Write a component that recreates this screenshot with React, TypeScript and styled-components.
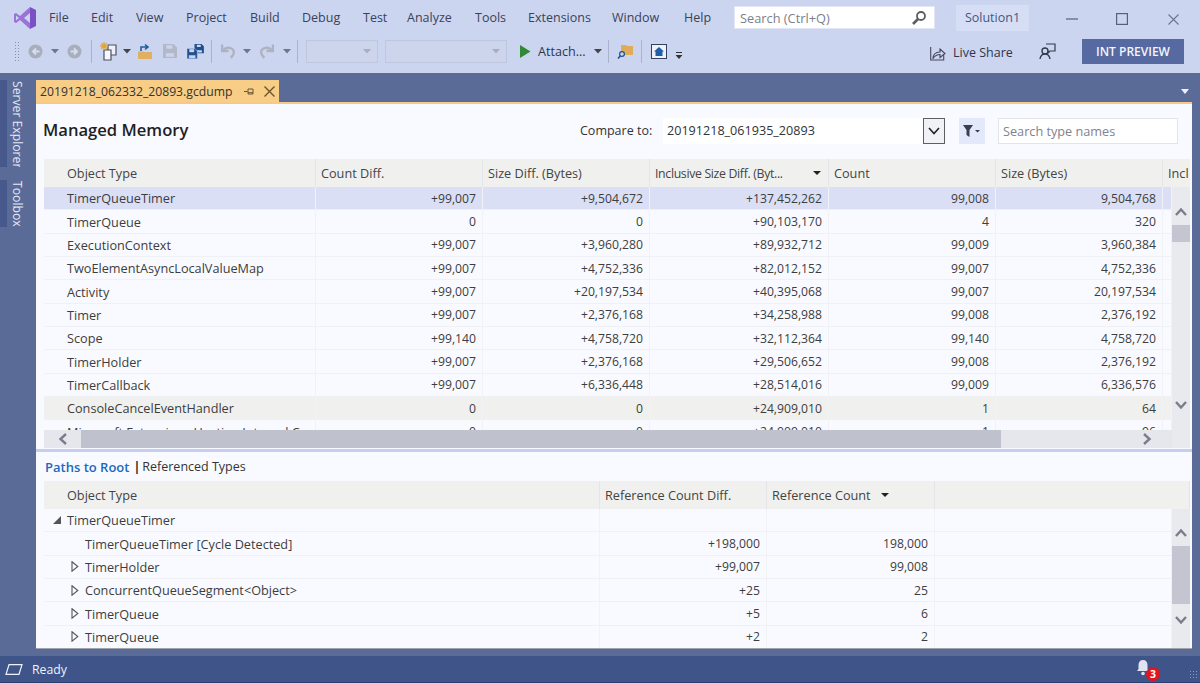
import React from "react";
import styled, { createGlobalStyle } from "styled-components";

const Global = createGlobalStyle`
  html, body { margin: 0; padding: 0; }
  body { width: 1200px; height: 683px; overflow: hidden; background: #5b6b97; font-family: "Open Sans", "Noto Sans", "Liberation Sans", sans-serif; font-size: 12px; color: #3a3a3a; }
  * { box-sizing: border-box; }
`;

const Page = styled.div`
  width: 1200px; height: 683px; display: flex; flex-direction: column; background: #5b6b97; overflow: hidden;
`;
const Chrome = styled.header`
  height: 73px; background: #ccd5f0; display: flex; flex-direction: column; flex: none;
`;
const MenuRow = styled.div`
  height: 35px; display: flex; align-items: center; padding-left: 13px;
`;
const LogoSlot = styled.div`
  width: 36px; height: 35px; display: flex; align-items: center; flex: none;
`;
const MenuItem = styled.div<{ $w: number }>`
  width: ${(p) => p.$w}px; font-size: 12.5px; color: #3b4258; flex: none;
`;
const QuickSearch = styled.div`
  width: 201px; height: 23px; background: #fff; display: flex; align-items: center; justify-content: space-between;
  padding: 0 7px 0 5px; color: #7c7f8a; font-size: 12.8px; flex: none; border: 1px solid #e3e7f5;
`;
const SolutionName = styled.div`
  width: 73px; height: 26px; margin-left: 21px; background: #d6def5; color: #48567f; font-size: 12.5px;
  display: flex; align-items: center; justify-content: center; flex: none;
`;
const WindowButtons = styled.div`
  margin-left: auto; display: flex;
`;
const WindowButton = styled.div<{ $w: number }>`
  width: ${(p) => p.$w}px; height: 35px; display: flex; align-items: center; justify-content: center; padding-top: 3px;
`;
const ToolRow = styled.div`
  height: 38px; padding: 0 16px 6px 12px; display: flex; align-items: center;
`;
const Slot = styled.div<{ $w: number; $ml?: number }>`
  width: ${(p) => p.$w}px; margin-left: ${(p) => p.$ml ?? 0}px; height: 24px; display: flex; align-items: center; justify-content: center; flex: none;
`;
const ToolSep = styled.div`
  width: 1px; height: 23px; background: #a9b2cd;
`;
const Grip = styled.div`
  width: 7px; height: 20px;
  background-image: radial-gradient(#8a90a3 0.9px, transparent 1px);
  background-size: 3px 3px;
`;
const ToolCombo = styled.div<{ $w: number; $ml: number }>`
  width: ${(p) => p.$w}px; margin-left: ${(p) => p.$ml}px; height: 23px; background: #cdd5ec; border: 1px solid #bfc7dc;
  display: flex; align-items: center; justify-content: flex-end; padding-right: 6px; flex: none;
`;
const AttachLabel = styled.div`
  width: 53px; margin-left: 1px; font-size: 12.6px; color: #30354a; flex: none;
`;
const ToolRight = styled.div`
  margin-left: auto; display: flex; align-items: center;
`;
const LiveShareLabel = styled.div`
  margin-left: 7px; font-size: 12.5px; color: #30354a; width: 86px; padding-top: 3px;
`;
const PreviewButton = styled.div`
  width: 102px; height: 25px; margin-left: 26px; background: #5669a0; color: #f3f5fc; font-size: 12px; font-weight: 600;
  display: flex; align-items: center; justify-content: center;
`;
const Workspace = styled.div`
  flex: 1; display: flex; min-height: 0;
`;
const SideRail = styled.aside`
  width: 36px; flex: none; padding-top: 7px; display: flex; flex-direction: column; gap: 13px;
`;
const RailTab = styled.div<{ $h: number }>`
  height: ${(p) => p.$h}px; border-left: 7px solid #47598c; writing-mode: vertical-rl; color: #e4e8f7; font-size: 12.2px;
  padding: 1px 11px 0 0; line-height: 16px; white-space: nowrap; overflow: hidden;
`;
const DocArea = styled.main`
  width: 1156px; flex: none; display: flex; flex-direction: column; padding-top: 7px;
`;
const TabStrip = styled.div`
  height: 22px; display: flex; position: relative; flex: none;
`;
const DocTab = styled.div`
  width: 243px; background: #f8cd85; display: flex; align-items: center; padding-left: 4px; font-size: 12.2px; color: #333;
`;
const TabName = styled.span`
  width: 204px; flex: none;
`;
const TabIcons = styled.div`
  display: flex; align-items: center; gap: 9px;
`;
const StripMenu = styled.div`
  position: absolute; right: 3px; top: 9px;
  width: 0; height: 0; border-left: 4px solid transparent; border-right: 4px solid transparent; border-top: 5px solid #eef1fb;
`;
const Content = styled.div`
  height: 547px; background: #f9faff; border-top: 2px solid #f6c987; border-bottom: 1px solid #9ea3ae; display: flex; flex-direction: column; flex: none;
`;
const TitleRow = styled.div`
  height: 55px; flex: none; display: flex; align-items: center; padding: 0 14px 2px 7px;
`;
const Title = styled.h1`
  margin: 0 auto 0 0; font-size: 16.6px; font-weight: 600; color: #1f1f1f; position: relative; top: -1px;
`;
const CompareLabel = styled.div`
  font-size: 12.5px; color: #333; width: 83px; flex: none;
`;
const CompareCombo = styled.div`
  width: 282px; height: 26px; background: #fff; display: flex; align-items: center; justify-content: space-between;
  padding-left: 4px; font-size: 12.6px; color: #333; flex: none;
`;
const ComboButton = styled.div`
  width: 22px; height: 26px; border: 1px solid #5f5f5f; background: #f1f2f5; display: flex; align-items: center; justify-content: center;
`;
const FilterButton = styled.div`
  width: 26px; height: 26px; margin-left: 14px; background: #e3e8fa; display: flex; align-items: center; justify-content: center; flex: none;
`;
const TypeSearch = styled.div`
  width: 180px; height: 26px; margin-left: 13px; background: #fff; border: 1px solid #e3e4ea; color: #80838c; font-size: 12.7px;
  display: flex; align-items: center; padding-left: 4px; flex: none;
`;
const GridBlock = styled.section`
  margin: 0 2px 0 8px; flex: none;
`;
const HeaderRow = styled.div<{ $cols: string; $h: number }>`
  display: grid; grid-template-columns: ${(p) => p.$cols}; height: ${(p) => p.$h}px; background: #f0f1ee; overflow: hidden; padding-right: 4px;
`;
const HeaderCell = styled.div<{ $tight?: boolean; $start?: boolean }>`
  display: flex; align-items: center; justify-content: ${(p) => (p.$start ? "flex-start" : "space-between")}; padding: 0 5px; border-right: 1px solid #e4e5e8;
  font-size: ${(p) => (p.$tight ? "12.3px" : "12.7px")}; letter-spacing: ${(p) => (p.$tight ? "-0.33px" : "0")}; color: #444; white-space: nowrap; overflow: hidden;
`;
const SortGlyph = styled.span<{ $gap?: number }>`
  width: 0; height: 0; border-left: 4px solid transparent; border-right: 4px solid transparent; border-top: 4px solid #222; flex: none; margin: 0 2px 0 ${(p) => p.$gap ?? 4}px;
`;
const ObjectHeader = styled(HeaderCell)`
  padding-left: 23px;
`;
const BodyLayout = styled.div`
  display: flex;
`;
const BodyMain = styled.div`
  flex: 1; min-width: 0; display: flex; flex-direction: column;
`;
const RowsViewport = styled.div<{ $h: number }>`
  height: ${(p) => p.$h}px; overflow: hidden;
`;
const DataRow = styled.div<{ $cols: string; $state?: string }>`
  display: grid; grid-template-columns: ${(p) => p.$cols}; height: 23.35px;
  background: ${(p) => (p.$state === "selected" ? "#dadff6" : p.$state === "hover" ? "#f0f1ee" : "#f9faff")};
  border-bottom: 1px solid ${(p) => (p.$state === "selected" ? "#eef0fb" : "#f0f1f4")};
`;
const NameCell = styled.div<{ $indent?: number }>`
  display: flex; align-items: center; padding-left: ${(p) => p.$indent ?? 23}px; font-size: 12.7px; color: #3d3d3d; white-space: nowrap; overflow: hidden;
  border-right: 1px solid #f1f2f6;
`;
const NumCell = styled.div`
  display: flex; align-items: center; justify-content: flex-end; padding-right: 6px; font-size: 12.2px; color: #3d3d3d; white-space: nowrap;
  border-right: 1px solid #f1f2f6;
`;
const Expander = styled.span`
  width: 18px; flex: none; display: flex; align-items: center; justify-content: center; margin: 0 1px 0 -19px;
`;
const HScroll = styled.div`
  height: 18px; background: #e6e7ec; display: flex; align-items: center; flex: none;
`;
const HArrow = styled.div<{ $w: number }>`
  width: ${(p) => p.$w}px; display: flex; justify-content: center; flex: none;
`;
const HThumb = styled.div`
  width: 920px; height: 18px; background: #bfc1cc; flex: none;
`;
const VScroll = styled.div`
  width: 18px; flex: none; background: #e9eaee; display: flex; flex-direction: column; align-items: center;
`;
const VArrowSlot = styled.div<{ $top: number; $bottom: number }>`
  height: 12px; margin-top: ${(p) => p.$top}px; margin-bottom: ${(p) => p.$bottom}px; display: flex; align-items: center; flex: none;
`;
const VThumb = styled.div<{ $h: number }>`
  width: 18px; height: ${(p) => p.$h}px; background: #c3c5d0; flex: none;
`;
const Splitter = styled.div`
  height: 3px; margin-top: 1px; background: #c5cff0; flex: none;
`;
const PaneTabs = styled.div`
  height: 29px; flex: none; display: flex; align-items: center; padding-left: 9px; font-size: 12.5px; color: #333;
`;
const PaneLink = styled.span`
  color: #2068c0; font-weight: 600; font-size: 13px;
`;
const PaneSep = styled.span`
  margin: 0 2px 0 4px; color: #222; font-weight: 700;
`;
const GapBar = styled.div`
  height: 7px; flex: none;
`;
const StatusBar = styled.footer`
  height: 27px; background: #3f5489; border-bottom: 1px solid #2f4070; display: flex; align-items: center; padding: 0 0 0 5px; color: #eef1fb; font-size: 12.3px; position: relative; flex: none;
`;
const StatusText = styled.span`
  margin-left: 9px;
`;
const BellBox = styled.div`
  position: absolute; left: 1137px; top: 4px; width: 24px; height: 22px;
`;
const Badge = styled.div`
  position: absolute; left: 9px; top: 7px; width: 14px; height: 14px; border-radius: 50%; background: #e3141c; color: #fff; font-size: 10.5px; font-weight: 700;
  display: flex; align-items: center; justify-content: center; line-height: 1;
`;
const ResizeGrip = styled.div`
  position: absolute; right: 2px; bottom: 3px; width: 9px; height: 9px;
  background-image: radial-gradient(#8c9bc4 0.8px, transparent 1px); background-size: 3px 3px;
`;
const RotSvg = styled.svg<{ $rot: number }>`
  transform: rotate(${(p) => p.$rot}deg);
`;
const FlipSvg = styled.svg<{ $flip?: boolean }>`
  transform: ${(p) => (p.$flip ? "scaleX(-1)" : "none")};
`;
const OverflowSvg = styled.svg`
  margin-top: 10px;
`;
const ShareSvg = styled.svg`
  margin: 3px 0 0 2px;
`;

const Drop = ({ c = "#444" }: { c?: string }) => (
  <svg width="8" height="5" viewBox="0 0 8 5"><path d="M0 0h8L4 4.500z" fill={c} /></svg>
);
const Chevron = ({ dir, c = "#7b7d8c" }: { dir: "up" | "down" | "left" | "right"; c?: string }) => {
  const rot = { up: 0, right: 90, down: 180, left: 270 }[dir];
  return (
    <RotSvg $rot={rot} width="14" height="14" viewBox="0 0 14 14">
      <path d="M2 10 L7 4.500 L12 10" fill="none" stroke={c} strokeWidth="2.400" />
    </RotSvg>
  );
};
const VsLogo = () => (
  <svg width="24" height="24" viewBox="0 0 24 24">
    <path fillRule="evenodd" d="M17 1 L7 10 L3 7 L1 8 V16 L3 17 L7 14 L17 23 Z M17 7 V17 L11 12 Z M3 9.500 L6 12 L3 14.500 Z" fill="#9b72d6" />
    <path d="M17 1 L23 4 V20 L17 23 Z" fill="#7d4fc4" />
  </svg>
);
const Magnifier = () => (
  <svg width="16" height="16" viewBox="0 0 16 16">
    <circle cx="10" cy="6" r="4" fill="none" stroke="#5d5d5d" strokeWidth="1.800" />
    <path d="M7 9 L2 14" stroke="#5d5d5d" strokeWidth="2.600" />
  </svg>
);
const CircleArrow = ({ left }: { left?: boolean }) => (
  <FlipSvg $flip={left} width="15" height="15" viewBox="0 0 15 15">
    <circle cx="7.500" cy="7.500" r="7" fill="#a9aebd" />
    <path d="M3.500 7.500h6M7 4.500l3 3-3 3" fill="none" stroke="#d8def2" strokeWidth="1.800" />
  </FlipSvg>
);
const NewProject = () => (
  <svg width="20" height="20" viewBox="0 0 20 20">
    <path d="M9 4h8v10h-8z" fill="#eef1fb" stroke="#4d5160" strokeWidth="1.200" />
    <path d="M5 9h7v10H5z" fill="#f7f8fd" stroke="#4d5160" strokeWidth="1.200" />
    <path d="M5 1v8M1 5h8M2.200 2.200l5.600 5.600M7.800 2.200l-5.600 5.600" stroke="#e0a63c" strokeWidth="1.300" />
  </svg>
);
const OpenFolder = () => (
  <svg width="16" height="17" viewBox="0 0 16 17">
    <path d="M1 9h14v7H2a1 1 0 0 1-1-1z" fill="#e0b060" />
    <path d="M1 8h5l1 1H1z" fill="#e8c27e" />
    <path d="M4 8V4h6M8 1.500l3 2.500-3 2.500" fill="none" stroke="#1f5d9f" strokeWidth="1.600" />
  </svg>
);
const DISC = "M0 0h9l3 3v9H0z M3 1v3h5V1z M2.500 8h7v3h-7z";
const Save = () => <svg width="14" height="14" viewBox="0 0 12 12"><path d={DISC} fill="#b3b8c8" fillRule="evenodd" /></svg>;
const SaveAll = () => (
  <svg width="17" height="15" viewBox="0 0 17 15">
    <path transform="translate(7.500 0) scale(.78)" d={DISC} fill="#1c4f8f" fillRule="evenodd" />
    <path transform="translate(0 4.500) scale(.86)" d={DISC} fill="#1c4f8f" fillRule="evenodd" stroke="#ccd5f0" strokeWidth=".6" />
  </svg>
);
const Undo = ({ redo }: { redo?: boolean }) => (
  <FlipSvg $flip={redo} width="16" height="16" viewBox="0 0 15 15">
    <path d="M2 1.500v6h6" fill="none" stroke="#aeb3c4" strokeWidth="2.200" />
    <path d="M3 7c3-4 10-3 10 2 0 2-1 3-3 5" fill="none" stroke="#aeb3c4" strokeWidth="2.200" />
  </FlipSvg>
);
const Play = () => <svg width="11" height="13" viewBox="0 0 11 13"><path d="M0 0 L10.500 6.500 L0 13z" fill="#2f8a35" /></svg>;
const FolderSearch = () => (
  <svg width="17" height="17" viewBox="0 0 17 17">
    <path d="M4 2h5l1 1h6v9H5V8H4z" fill="#e0ab5a" />
    <circle cx="5" cy="11" r="2.400" fill="#ccd5f0" stroke="#1c4f8f" strokeWidth="1.200" />
    <path d="M3.300 13 L1 15.500" stroke="#1c4f8f" strokeWidth="1.600" />
  </svg>
);
const HomeWindow = () => (
  <svg width="16" height="15" viewBox="0 0 16 15">
    <rect x=".5" y=".5" width="15" height="14" fill="#eef1fb" stroke="#33405f" />
    <path d="M8 3 L13 7.500H11.500V12H4.500V7.500H3z" fill="#1f5fa8" />
  </svg>
);
const Overflow = () => (
  <OverflowSvg width="8" height="8" viewBox="0 0 8 8">
    <path d="M1 0.500h6" stroke="#333" /><path d="M0.500 3h7L4 7z" fill="#333" />
  </OverflowSvg>
);
const ShareIcon = () => (
  <ShareSvg width="16" height="16" viewBox="0 0 16 16">
    <path d="M.7 2v13h13V10" fill="none" stroke="#444a5e" strokeWidth="1.100" />
    <path d="M3 14c0-5 3-7 7-7V4l5 4.500-5 4v-3c-3 0-5 1-7 4z" fill="none" stroke="#444a5e" strokeWidth="1.100" />
  </ShareSvg>
);
const FeedbackIcon = () => (
  <svg width="17" height="17" viewBox="0 0 17 17">
    <path d="M7 1h9v7H11l-2 2V8" fill="none" stroke="#333a50" strokeWidth="1.200" />
    <circle cx="6" cy="8" r="3" fill="#ccd5f0" stroke="#333a50" strokeWidth="1.400" />
    <path d="M1 16c.5-3 2-5 5-5s4.500 2 5 5" fill="none" stroke="#333a50" strokeWidth="1.400" />
  </svg>
);
const PinIcon = () => (
  <svg width="11" height="9" viewBox="0 0 11 9">
    <path d="M0 4.500h3.500M4 2v5M4 2h5v5H4M4 5.700h5" fill="none" stroke="#6a5430" />
  </svg>
);
const CloseX = ({ size = 11, c = "#6a5430", w = 1.400 }: { size?: number; c?: string; w?: number }) => (
  <svg width={size} height={size} viewBox="0 0 11 11"><path d="M.5 .5l10 10M10.500 .5l-10 10" stroke={c} strokeWidth={w} /></svg>
);
const FilterIcon = () => (
  <svg width="18" height="12" viewBox="0 0 18 12">
    <path d="M0 0h10L6.500 5v7l-3-2V5z" fill="#3a3f4b" /><path d="M12 5h5l-2.500 2.500z" fill="#3a3f4b" />
  </svg>
);
const ComboChevron = () => (
  <svg width="12" height="8" viewBox="0 0 12 8"><path d="M1 1 L6 6.500 L11 1" fill="none" stroke="#222" strokeWidth="1.600" /></svg>
);
const TreeClosed = () => (
  <svg width="8" height="11" viewBox="0 0 8 11"><path d="M1 .8 L6.800 5.500 L1 10.200z" fill="none" stroke="#555" strokeWidth="1.100" /></svg>
);
const TreeOpen = () => (
  <svg width="8" height="8" viewBox="0 0 8 8"><path d="M8 0v8H0z" fill="#555" /></svg>
);
const StatusIcon = () => (
  <svg width="18" height="11" viewBox="0 0 18 11"><path d="M4 .7h13L14 10.300H1z" fill="none" stroke="#eef1fb" strokeWidth="1.200" /></svg>
);
const Bell = () => (
  <svg width="12" height="16" viewBox="0 0 12 16">
    <path d="M6 0c3 0 4.500 2 4.500 5v4l1.500 2H0l1.500-2V5C1.500 2 3 0 6 0z" fill="#dfe3f2" /><circle cx="6" cy="13.500" r="1.800" fill="#dfe3f2" />
  </svg>
);

const menus: [string, number][] = [["File", 42], ["Edit", 45], ["View", 50], ["Project", 64], ["Build", 52], ["Debug", 61], ["Test", 44], ["Analyze", 68], ["Tools", 53], ["Extensions", 84], ["Window", 72], ["Help", 50]];

const topCols = "272px 167px 167px 179px 167px 167px 29px";
const topBodyCols = "272px 167px 167px 179px 167px 167px 9px";
const topHeaders = ["Count Diff.", "Size Diff. (Bytes)", "Inclusive Size Diff. (Byt...", "Count", "Size (Bytes)", "Incl"];
const topRows: { name: string; vals: string[]; state?: string }[] = [
  { name: "TimerQueueTimer", vals: ["+99,007", "+9,504,672", "+137,452,262", "99,008", "9,504,768"], state: "selected" },
  { name: "TimerQueue", vals: ["0", "0", "+90,103,170", "4", "320"] },
  { name: "ExecutionContext", vals: ["+99,007", "+3,960,280", "+89,932,712", "99,009", "3,960,384"] },
  { name: "TwoElementAsyncLocalValueMap", vals: ["+99,007", "+4,752,336", "+82,012,152", "99,007", "4,752,336"] },
  { name: "Activity", vals: ["+99,007", "+20,197,534", "+40,395,068", "99,007", "20,197,534"] },
  { name: "Timer", vals: ["+99,007", "+2,376,168", "+34,258,988", "99,008", "2,376,192"] },
  { name: "Scope", vals: ["+99,140", "+4,758,720", "+32,112,364", "99,140", "4,758,720"] },
  { name: "TimerHolder", vals: ["+99,007", "+2,376,168", "+29,506,652", "99,008", "2,376,192"] },
  { name: "TimerCallback", vals: ["+99,007", "+6,336,448", "+28,514,016", "99,009", "6,336,576"] },
  { name: "ConsoleCancelEventHandler", vals: ["0", "0", "+24,909,010", "1", "64"], state: "hover" },
  { name: "Microsoft.Extensions.Hosting.Internal.C", vals: ["0", "0", "+24,909,010", "1", "96"] },
];

const lowCols = "556px 167px 168px 255px";
const lowBodyCols = "556px 167px 168px 237px";
const lowRows: { name: string; a: string; b: string; indent: number; tree?: "open" | "closed" }[] = [
  { name: "TimerQueueTimer", a: "", b: "", indent: 23, tree: "open" },
  { name: "TimerQueueTimer [Cycle Detected]", a: "+198,000", b: "198,000", indent: 41 },
  { name: "TimerHolder", a: "+99,007", b: "99,008", indent: 41, tree: "closed" },
  { name: "ConcurrentQueueSegment<Object>", a: "+25", b: "25", indent: 41, tree: "closed" },
  { name: "TimerQueue", a: "+5", b: "6", indent: 41, tree: "closed" },
  { name: "TimerQueue", a: "+2", b: "2", indent: 41, tree: "closed" },
];

export default function App() {
  return (
    <Page>
      <Global />
      <Chrome>
        <MenuRow>
          <LogoSlot><VsLogo /></LogoSlot>
          {menus.map(([m, w]) => <MenuItem key={m} $w={w}>{m}</MenuItem>)}
          <QuickSearch>Search (Ctrl+Q)<Magnifier /></QuickSearch>
          <SolutionName>Solution1</SolutionName>
          <WindowButtons>
            <WindowButton $w={50}><svg width="12" height="2" viewBox="0 0 12 2"><path d="M0 1h12" stroke="#55607f" strokeWidth="1.200" /></svg></WindowButton>
            <WindowButton $w={50}><svg width="12" height="12" viewBox="0 0 12 12"><rect x=".6" y=".6" width="10.800" height="10.800" fill="none" stroke="#55607f" strokeWidth="1.200" /></svg></WindowButton>
            <WindowButton $w={53}><CloseX c="#6b7590" w={1.100} /></WindowButton>
          </WindowButtons>
        </MenuRow>
        <ToolRow>
          <Slot $w={10}><Grip /></Slot>
          <Slot $w={26}><CircleArrow left /></Slot>
          <Slot $w={14}><Drop c="#70768a" /></Slot>
          <Slot $w={24}><CircleArrow /></Slot>
          <Slot $w={10}><ToolSep /></Slot>
          <Slot $w={26}><NewProject /></Slot>
          <Slot $w={9}><Drop /></Slot>
          <Slot $w={28}><OpenFolder /></Slot>
          <Slot $w={22}><Save /></Slot>
          <Slot $w={28}><SaveAll /></Slot>
          <Slot $w={4}><ToolSep /></Slot>
          <Slot $w={30}><Undo /></Slot>
          <Slot $w={8}><Drop c="#70768a" /></Slot>
          <Slot $w={32}><Undo redo /></Slot>
          <Slot $w={8}><Drop c="#70768a" /></Slot>
          <Slot $w={12}><ToolSep /></Slot>
          <ToolCombo $w={72} $ml={3}><Drop c="#a8aebf" /></ToolCombo>
          <ToolCombo $w={122} $ml={7}><Drop c="#a8aebf" /></ToolCombo>
          <Slot $w={24} $ml={6}><Play /></Slot>
          <AttachLabel>Attach...</AttachLabel>
          <Slot $w={14}><Drop /></Slot>
          <Slot $w={6}><ToolSep /></Slot>
          <Slot $w={28}><FolderSearch /></Slot>
          <Slot $w={4}><ToolSep /></Slot>
          <Slot $w={32}><HomeWindow /></Slot>
          <Slot $w={8}><Overflow /></Slot>
          <ToolRight>
            <ShareIcon />
            <LiveShareLabel>Live Share</LiveShareLabel>
            <FeedbackIcon />
            <PreviewButton>INT PREVIEW</PreviewButton>
          </ToolRight>
        </ToolRow>
      </Chrome>
      <Workspace>
        <SideRail>
          <RailTab $h={87}>Server Explorer</RailTab>
          <RailTab $h={47}>Toolbox</RailTab>
        </SideRail>
        <DocArea>
          <TabStrip>
            <DocTab>
              <TabName>20191218_062332_20893.gcdump</TabName>
              <TabIcons><PinIcon /><CloseX /></TabIcons>
            </DocTab>
            <StripMenu />
          </TabStrip>
          <Content>
            <TitleRow>
              <Title>Managed Memory</Title>
              <CompareLabel>Compare to:</CompareLabel>
              <CompareCombo>20191218_061935_20893<ComboButton><ComboChevron /></ComboButton></CompareCombo>
              <FilterButton><FilterIcon /></FilterButton>
              <TypeSearch>Search type names</TypeSearch>
            </TitleRow>
            <GridBlock>
              <HeaderRow $cols={topCols} $h={28}>
                <ObjectHeader>Object Type</ObjectHeader>
                {topHeaders.map((h, i) => (
                  <HeaderCell key={h} $tight={i === 2}>{h}{i === 2 && <SortGlyph />}</HeaderCell>
                ))}
              </HeaderRow>
              <BodyLayout>
                <BodyMain>
                  <RowsViewport $h={243}>
                    {topRows.map((r) => (
                      <DataRow key={r.name} $cols={topBodyCols} $state={r.state}>
                        <NameCell>{r.name}</NameCell>
                        {r.vals.map((v, i) => <NumCell key={i}>{v}</NumCell>)}
                        <NumCell />
                      </DataRow>
                    ))}
                  </RowsViewport>
                  <HScroll>
                    <HArrow $w={37}><Chevron dir="left" /></HArrow>
                    <HThumb />
                    <HArrow $w={292}><Chevron dir="right" /></HArrow>
                  </HScroll>
                </BodyMain>
                <VScroll>
                  <VArrowSlot $top={19} $bottom={7}><Chevron dir="up" /></VArrowSlot>
                  <VThumb $h={17} />
                  <VArrowSlot $top={157} $bottom={0}><Chevron dir="down" /></VArrowSlot>
                </VScroll>
              </BodyLayout>
            </GridBlock>
            <Splitter />
            <PaneTabs>
              <PaneLink>Paths to Root</PaneLink><PaneSep>|</PaneSep>Referenced Types
            </PaneTabs>
            <GridBlock>
              <HeaderRow $cols={lowCols} $h={28}>
                <ObjectHeader>Object Type</ObjectHeader>
                <HeaderCell>Reference Count Diff.</HeaderCell>
                <HeaderCell $start>Reference Count<SortGlyph $gap={10} /></HeaderCell>
                <HeaderCell />
              </HeaderRow>
              <BodyLayout>
                <BodyMain>
                  <RowsViewport $h={139}>
                    {lowRows.map((r, i) => (
                      <DataRow key={i} $cols={lowBodyCols}>
                        <NameCell $indent={r.indent}>
                          {r.tree && <Expander>{r.tree === "open" ? <TreeOpen /> : <TreeClosed />}</Expander>}
                          {r.name}
                        </NameCell>
                        <NumCell>{r.a}</NumCell>
                        <NumCell>{r.b}</NumCell>
                        <NumCell />
                      </DataRow>
                    ))}
                  </RowsViewport>
                </BodyMain>
                <VScroll>
                  <VArrowSlot $top={18} $bottom={7}><Chevron dir="up" /></VArrowSlot>
                  <VThumb $h={58} />
                  <VArrowSlot $top={10} $bottom={0}><Chevron dir="down" /></VArrowSlot>
                </VScroll>
              </BodyLayout>
            </GridBlock>
          </Content>
        </DocArea>
      </Workspace>
      <GapBar />
      <StatusBar>
        <StatusIcon />
        <StatusText>Ready</StatusText>
        <BellBox><Bell /><Badge>3</Badge></BellBox>
        <ResizeGrip />
      </StatusBar>
    </Page>
  );
}
